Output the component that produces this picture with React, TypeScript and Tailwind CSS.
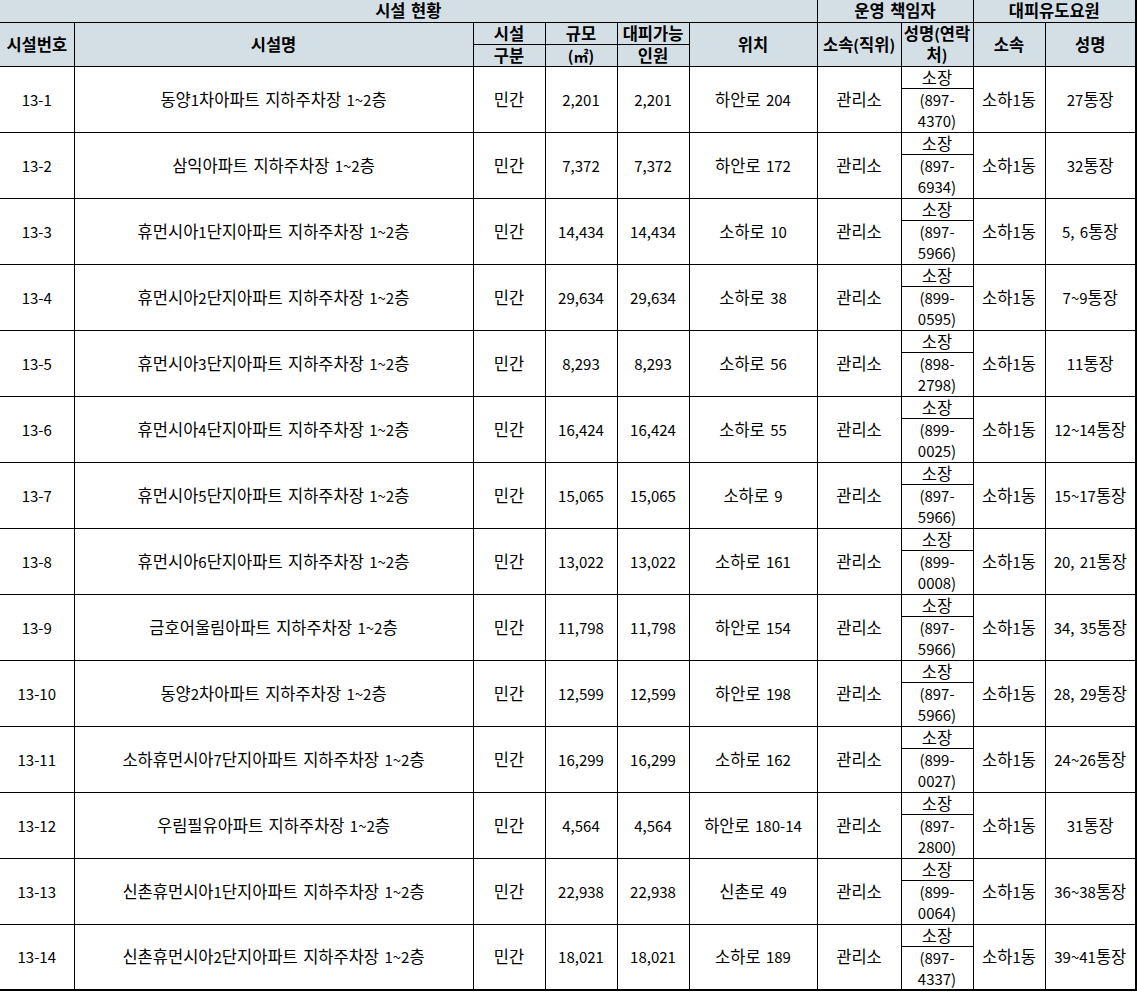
import React from "react";

interface Facility {
  no: string;
  name: string;
  area: string;
  location: string;
  phone: [string, string];
  dong: string;
  tong: string;
}

const rows: Facility[] = [
  { no: "13-1", name: "동양1차아파트 지하주차장 1~2층", area: "2,201", location: "하안로 204", phone: ["(897-", "4370)"], dong: "소하1동", tong: "27통장" },
  { no: "13-2", name: "삼익아파트 지하주차장 1~2층", area: "7,372", location: "하안로 172", phone: ["(897-", "6934)"], dong: "소하1동", tong: "32통장" },
  { no: "13-3", name: "휴먼시아1단지아파트 지하주차장 1~2층", area: "14,434", location: "소하로 10", phone: ["(897-", "5966)"], dong: "소하1동", tong: "5, 6통장" },
  { no: "13-4", name: "휴먼시아2단지아파트 지하주차장 1~2층", area: "29,634", location: "소하로 38", phone: ["(899-", "0595)"], dong: "소하1동", tong: "7~9통장" },
  { no: "13-5", name: "휴먼시아3단지아파트 지하주차장 1~2층", area: "8,293", location: "소하로 56", phone: ["(898-", "2798)"], dong: "소하1동", tong: "11통장" },
  { no: "13-6", name: "휴먼시아4단지아파트 지하주차장 1~2층", area: "16,424", location: "소하로 55", phone: ["(899-", "0025)"], dong: "소하1동", tong: "12~14통장" },
  { no: "13-7", name: "휴먼시아5단지아파트 지하주차장 1~2층", area: "15,065", location: "소하로 9", phone: ["(897-", "5966)"], dong: "소하1동", tong: "15~17통장" },
  { no: "13-8", name: "휴먼시아6단지아파트 지하주차장 1~2층", area: "13,022", location: "소하로 161", phone: ["(899-", "0008)"], dong: "소하1동", tong: "20, 21통장" },
  { no: "13-9", name: "금호어울림아파트 지하주차장 1~2층", area: "11,798", location: "하안로 154", phone: ["(897-", "5966)"], dong: "소하1동", tong: "34, 35통장" },
  { no: "13-10", name: "동양2차아파트 지하주차장 1~2층", area: "12,599", location: "하안로 198", phone: ["(897-", "5966)"], dong: "소하1동", tong: "28, 29통장" },
  { no: "13-11", name: "소하휴먼시아7단지아파트 지하주차장 1~2층", area: "16,299", location: "소하로 162", phone: ["(899-", "0027)"], dong: "소하1동", tong: "24~26통장" },
  { no: "13-12", name: "우림필유아파트 지하주차장 1~2층", area: "4,564", location: "하안로 180-14", phone: ["(897-", "2800)"], dong: "소하1동", tong: "31통장" },
  { no: "13-13", name: "신촌휴먼시아1단지아파트 지하주차장 1~2층", area: "22,938", location: "신촌로 49", phone: ["(899-", "0064)"], dong: "소하1동", tong: "36~38통장" },
  { no: "13-14", name: "신촌휴먼시아2단지아파트 지하주차장 1~2층", area: "18,021", location: "소하로 189", phone: ["(897-", "4337)"], dong: "소하1동", tong: "39~41통장" },
];

// Hangul runs are set a bit larger so they get the width of the original sheet's font
function K({ text }: { text: string }) {
  const parts = text.split(/([가-힣]+)/);
  return (
    <>
      {parts.map((p, i) =>
        /[가-힣]/.test(p) ? (
          <span key={i} className="text-[16.5px] leading-[21px] align-top">
            {p}
          </span>
        ) : (
          <React.Fragment key={i}>{p}</React.Fragment>
        )
      )}
    </>
  );
}

const th = "border border-black bg-[#d3dfe5] font-bold text-center align-middle p-0 whitespace-nowrap";
const td = "border border-black bg-white text-center align-middle p-0 whitespace-nowrap";

export default function App() {
  return (
    <div
      className="bg-white text-black text-[15px] leading-[21px] [word-spacing:2px]"
      style={{ fontFamily: '"Noto Sans CJK KR", "Noto Sans", sans-serif' }}
    >
      <table className="table-fixed border-collapse w-[1136px] border-r-2 border-b-2 border-black">
        <colgroup>
          <col className="w-[74px]" />
          <col className="w-[399px]" />
          <col className="w-[72px]" />
          <col className="w-[72px]" />
          <col className="w-[72px]" />
          <col className="w-[128px]" />
          <col className="w-[84px]" />
          <col className="w-[72px]" />
          <col className="w-[72px]" />
          <col className="w-[91px]" />
        </colgroup>
        <thead>
          <tr className="h-[22px]">
            <th colSpan={6} className={`${th} border-l-0 border-t-0`}><K text="시설 현황" /></th>
            <th colSpan={2} className={`${th} border-t-0`}><K text="운영 책임자" /></th>
            <th colSpan={2} className={`${th} border-t-0 border-r-2`}><K text="대피유도요원" /></th>
          </tr>
          <tr className="h-[22px]">
            <th rowSpan={2} className={`${th} border-l-0`}><K text="시설번호" /></th>
            <th rowSpan={2} className={th}><K text="시설명" /></th>
            <th className={th}><K text="시설" /></th>
            <th className={th}><K text="규모" /></th>
            <th className={th}><K text="대피가능" /></th>
            <th rowSpan={2} className={th}><K text="위치" /></th>
            <th rowSpan={2} className={th}><K text="소속(직위)" /></th>
            <th rowSpan={2} className={th}>
              <K text="성명(연락" />
              <br />
              <K text="처)" />
            </th>
            <th rowSpan={2} className={th}><K text="소속" /></th>
            <th rowSpan={2} className={`${th} border-r-2`}><K text="성명" /></th>
          </tr>
          <tr className="h-[22px]">
            <th className={th}><K text="구분" /></th>
            <th className={th}>(㎡)</th>
            <th className={th}><K text="인원" /></th>
          </tr>
        </thead>
        <tbody>
          {rows.map((r, i) => {
            const last = i === rows.length - 1 ? " border-b-2" : "";
            return (
              <React.Fragment key={r.no}>
                <tr className="h-[22px]">
                  <td rowSpan={2} className={`${td} border-l-0${last}`}>{r.no}</td>
                  <td rowSpan={2} className={`${td}${last}`}><K text={r.name} /></td>
                  <td rowSpan={2} className={`${td}${last}`}><K text="민간" /></td>
                  <td rowSpan={2} className={`${td}${last}`}>{r.area}</td>
                  <td rowSpan={2} className={`${td}${last}`}>{r.area}</td>
                  <td rowSpan={2} className={`${td}${last}`}><K text={r.location} /></td>
                  <td rowSpan={2} className={`${td}${last}`}><K text="관리소" /></td>
                  <td className={td}><K text="소장" /></td>
                  <td rowSpan={2} className={`${td}${last}`}><K text={r.dong} /></td>
                  <td rowSpan={2} className={`${td} border-r-2${last}`}><K text={r.tong} /></td>
                </tr>
                <tr className="h-[44px]">
                  <td className={`${td}${last}`}>
                    {r.phone[0]}
                    <br />
                    {r.phone[1]}
                  </td>
                </tr>
              </React.Fragment>
            );
          })}
        </tbody>
      </table>
    </div>
  );
}
